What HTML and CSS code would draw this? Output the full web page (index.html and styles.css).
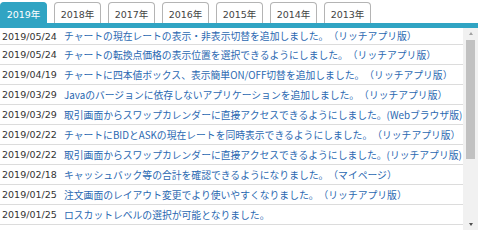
FILE: index.html
```html
<!DOCTYPE html>
<html lang="ja">
<head>
<meta charset="utf-8">
<title>お知らせ</title>
<link rel="stylesheet" href="styles.css">
</head>
<body>
<div class="page">
  <nav class="tabs">
    <a class="tab active">2019年</a>
    <a class="tab">2018年</a>
    <a class="tab">2017年</a>
    <a class="tab">2016年</a>
    <a class="tab">2015年</a>
    <a class="tab">2014年</a>
    <a class="tab">2013年</a>
  </nav>
  <div class="bar"></div>
  <div class="panel">
    <ul class="list">
      <li class="row"><span class="date">2019/05/24</span><a class="msg">チャートの現在レートの表示・非表示切替を追加しました。（リッチアプリ版）</a></li>
      <li class="row"><span class="date">2019/05/24</span><a class="msg">チャートの転換点価格の表示位置を選択できるようにしました。（リッチアプリ版）</a></li>
      <li class="row"><span class="date">2019/04/19</span><a class="msg">チャートに四本値ボックス、表示簡単ON/OFF切替を追加しました。（リッチアプリ版）</a></li>
      <li class="row"><span class="date">2019/03/29</span><a class="msg">Javaのバージョンに依存しないアプリケーションを追加しました。（リッチアプリ版）</a></li>
      <li class="row"><span class="date">2019/03/29</span><a class="msg">取引画面からスワップカレンダーに直接アクセスできるようにしました。(Webブラウザ版)</a></li>
      <li class="row"><span class="date">2019/02/22</span><a class="msg">チャートにBIDとASKの現在レートを同時表示できるようにしました。（リッチアプリ版）</a></li>
      <li class="row"><span class="date">2019/02/22</span><a class="msg">取引画面からスワップカレンダーに直接アクセスできるようにしました。(リッチアプリ版)</a></li>
      <li class="row"><span class="date">2019/02/18</span><a class="msg">キャッシュバック等の合計を確認できるようになりました。（マイページ）</a></li>
      <li class="row"><span class="date">2019/01/25</span><a class="msg">注文画面のレイアウト変更でより使いやすくなりました。（リッチアプリ版）</a></li>
      <li class="row"><span class="date">2019/01/25</span><a class="msg">ロスカットレベルの選択が可能となりました。</a></li>
    </ul>
    <div class="scrollbar">
      <div class="sb-btn up"></div>
      <div class="sb-track"><div class="sb-thumb"></div></div>
      <div class="sb-btn down"></div>
    </div>
  </div>
</div>
</body>
</html>
```

FILE: styles.css
```css
html, body {
  margin: 0;
  padding: 0;
  background: #ffffff;
}

body {
  font-family: "DejaVu Sans", "Noto Sans CJK JP", sans-serif;
  font-size: 9.5px;
  color: #333333;
}

.page {
  width: 478px;
  height: 230px;
  overflow: hidden;
}

.tabs {
  display: flex;
  gap: 7px;
  padding-top: 2px;
  height: 21px;
}

.tab {
  box-sizing: border-box;
  width: 47px;
  height: 21px;
  border: 1px solid #b4b4b4;
  border-bottom: none;
  border-radius: 4px 4px 0 0;
  background: #ffffff;
  color: #444444;
  display: flex;
  align-items: center;
  justify-content: center;
  padding-top: 1px;
}

.tab.active {
  background: #30a4c3;
  border-color: #30a4c3;
  color: #ffffff;
}

.bar {
  height: 5px;
  background: #30a4c3;
}

.panel {
  display: flex;
  height: 202px;
  overflow: hidden;
}

.list {
  flex: 1;
  min-width: 0;
  margin: 0;
  padding: 0;
  list-style: none;
}

.row {
  box-sizing: border-box;
  height: 20px;
  border-bottom: 1px solid #dcdcdc;
  display: flex;
  align-items: center;
  padding-left: 2px;
  white-space: nowrap;
}

.row:first-child {
  height: 17px;
}

.date {
  width: 62px;
  flex: none;
  color: #333333;
}

.msg {
  color: #2a68b1;
  font-family: "Noto Sans CJK JP", "DejaVu Sans", sans-serif;
  font-size: 9.8px;
  text-spacing-trim: space-all;
}

.scrollbar {
  width: 15px;
  flex: none;
  display: flex;
  flex-direction: column;
  background: #f1f1f1;
}

.sb-btn {
  height: 11px;
  flex: none;
  display: flex;
  align-items: center;
  justify-content: center;
}

.sb-btn::before {
  content: "";
  width: 0;
  height: 0;
  border-left: 2.5px solid transparent;
  border-right: 2.5px solid transparent;
}

.sb-btn.up::before {
  border-bottom: 3px solid #a3a3a3;
}

.sb-btn.down::before {
  border-top: 3px solid #505050;
}

.sb-track {
  flex: 1;
  display: flex;
  flex-direction: column;
  padding: 1px 3px 0 3px;
}

.sb-thumb {
  height: 119px;
  background: #c1c1c1;
}
```
